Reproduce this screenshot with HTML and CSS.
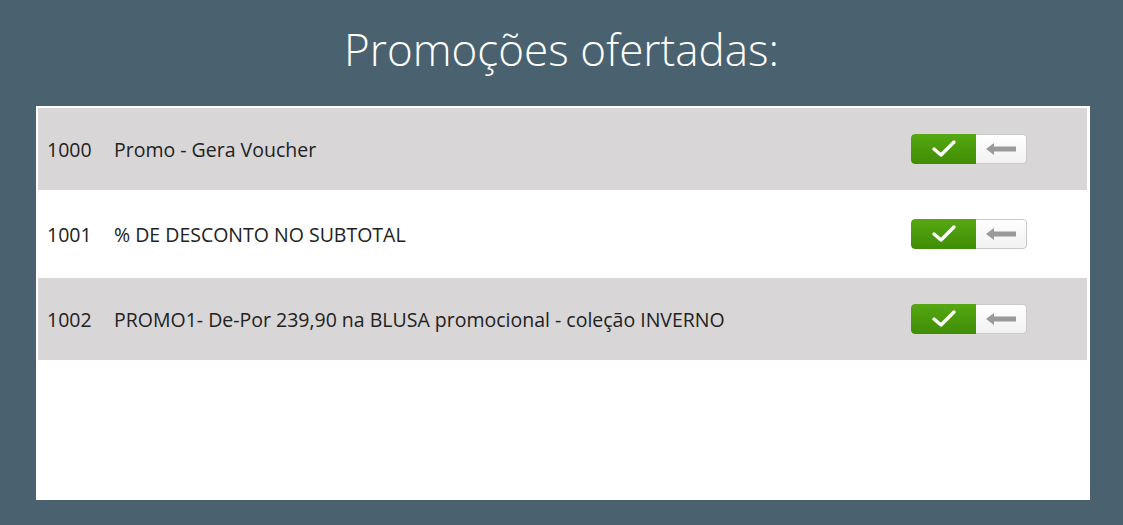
FILE: index.html
```
<!DOCTYPE html>
<html>
<head>
<meta charset="utf-8">
<link rel="stylesheet" href="styles.css">
</head>
<body>
<h1 class="title">Promoções ofertadas:</h1>
<div class="panel">
  <div class="row gray">
    <span class="code">1000</span>
    <span class="label">Promo - Gera Voucher</span>
    <div class="toggle">
      <div class="on"><svg width="28" height="20" viewBox="0 0 28 20"><path d="M4 10 L11 16 L24 3" fill="none" stroke="#fff" stroke-width="3.4" stroke-linecap="round" stroke-linejoin="round"/></svg></div>
      <div class="off"><svg width="32" height="14" viewBox="0 0 32 14"><path d="M1 7 L9 1 L9 4.5 L31 4.5 L31 9.5 L9 9.5 L9 13 Z" fill="#9a9a9a"/></svg></div>
    </div>
  </div>
  <div class="row white">
    <span class="code">1001</span>
    <span class="label">% DE DESCONTO NO SUBTOTAL</span>
    <div class="toggle">
      <div class="on"><svg width="28" height="20" viewBox="0 0 28 20"><path d="M4 10 L11 16 L24 3" fill="none" stroke="#fff" stroke-width="3.4" stroke-linecap="round" stroke-linejoin="round"/></svg></div>
      <div class="off"><svg width="32" height="14" viewBox="0 0 32 14"><path d="M1 7 L9 1 L9 4.5 L31 4.5 L31 9.5 L9 9.5 L9 13 Z" fill="#9a9a9a"/></svg></div>
    </div>
  </div>
  <div class="row gray">
    <span class="code">1002</span>
    <span class="label">PROMO1- De-Por 239,90 na BLUSA promocional - coleção INVERNO</span>
    <div class="toggle">
      <div class="on"><svg width="28" height="20" viewBox="0 0 28 20"><path d="M4 10 L11 16 L24 3" fill="none" stroke="#fff" stroke-width="3.4" stroke-linecap="round" stroke-linejoin="round"/></svg></div>
      <div class="off"><svg width="32" height="14" viewBox="0 0 32 14"><path d="M1 7 L9 1 L9 4.5 L31 4.5 L31 9.5 L9 9.5 L9 13 Z" fill="#9a9a9a"/></svg></div>
    </div>
  </div>
</div>
</body>
</html>
```
FILE: styles.css
```
html, body {
  margin: 0;
  padding: 0;
  background: #4a616f;
  width: 1123px;
  height: 525px;
  overflow: hidden;
}
body {
  font-family: "Open Sans", "Noto Sans", sans-serif;
  padding-top: 19px;
  box-sizing: border-box;
}
.title {
  margin: 0;
  height: 87px;
  text-align: center;
  color: #fff;
  font-weight: 300;
  font-size: 44px;
  line-height: 60px;
}
.panel {
  margin-left: 36px;
  width: 1054px;
  height: 394px;
  background: #fff;
  box-sizing: border-box;
  padding: 2px 3px 0 2px;
}
.row {
  display: flex;
  align-items: center;
  height: 82px;
  padding-left: 9px;
  color: #222;
  font-size: 19.5px;
}
.row.white {
  height: 88px;
  background: #fff;
}
.row.gray {
  background: #d8d6d7;
}
.code {
  width: 67px;
}
.label {
  flex: 1;
}
.toggle {
  display: flex;
  width: 116px;
  height: 30px;
  margin-right: 60px;
  border-radius: 4px;
  overflow: hidden;
}
.on {
  width: 65px;
  background: linear-gradient(#56a812, #3f8d05);
  display: flex;
  align-items: center;
  justify-content: center;
  border-radius: 4px 0 0 4px;
}
.off {
  flex: 1;
  background: linear-gradient(#ffffff, #f1f1f1);
  border: 1px solid #c9c9c9;
  border-left: none;
  border-radius: 0 4px 4px 0;
  display: flex;
  align-items: center;
  justify-content: center;
}
```
